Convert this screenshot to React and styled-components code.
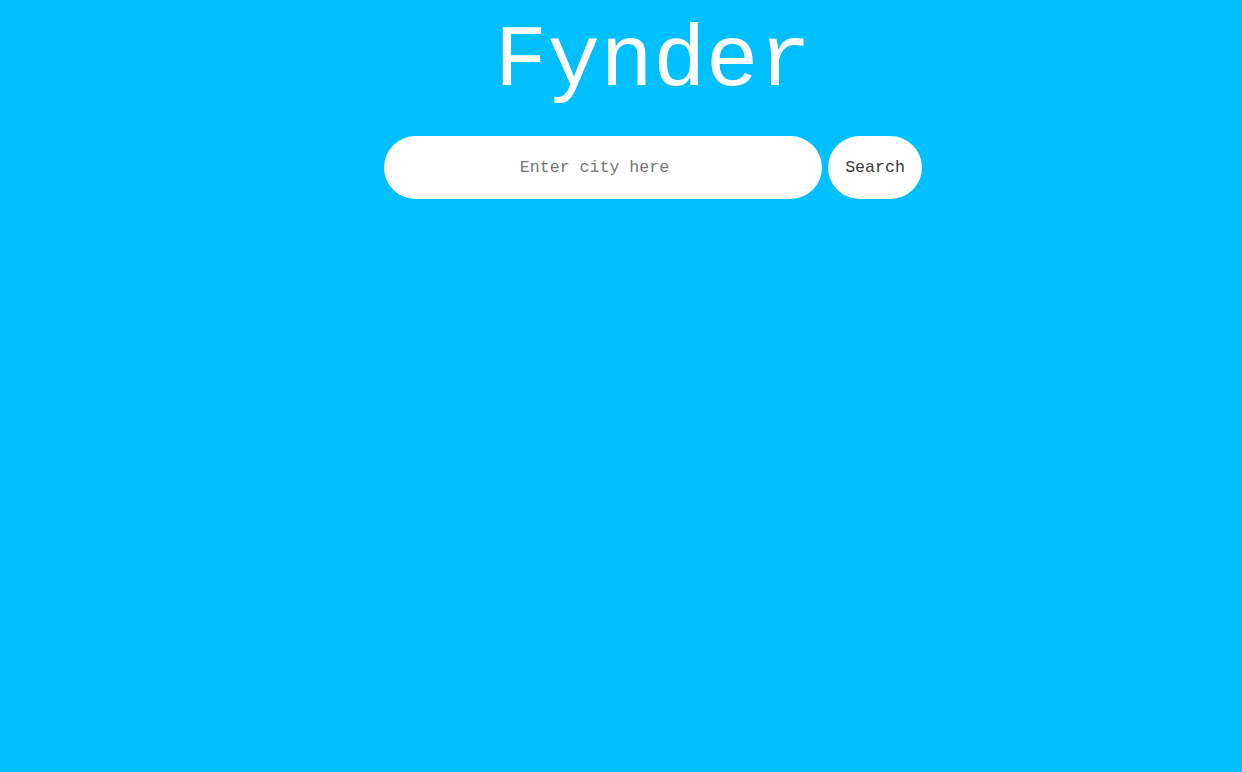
import React from 'react';
import styled, { createGlobalStyle } from 'styled-components';

const GlobalStyle = createGlobalStyle`
  html, body {
    margin: 0;
    padding: 0;
    background: #00bfff;
    font-family: 'Liberation Mono', 'Courier New', monospace;
  }
`;

const Page = styled.div`
  min-height: 772px;
  display: flex;
  flex-direction: column;
  align-items: center;
  padding-left: 64px;
  box-sizing: border-box;
`;

const Title = styled.h1`
  margin: 0;
  font-family: 'Liberation Mono', 'Courier New', monospace;
  font-weight: 400;
  font-size: 88px;
  line-height: 124px;
  color: #ffffff;
`;

const SearchRow = styled.form`
  display: flex;
  gap: 6px;
  margin-top: 12px;
`;

const CityInput = styled.input`
  width: 438px;
  height: 63px;
  box-sizing: border-box;
  padding: 0 17px 0 0;
  border: none;
  border-radius: 32px;
  background: #ffffff;
  outline: none;
  text-align: center;
  font-family: 'Liberation Mono', 'Courier New', monospace;
  font-size: 16.6px;
  color: #333;
  &::placeholder {
    color: #757575;
  }
`;

const SearchButton = styled.button`
  width: 94px;
  height: 63px;
  padding: 0;
  border: none;
  border-radius: 32px;
  background: #ffffff;
  font-family: 'Liberation Mono', 'Courier New', monospace;
  font-size: 16.6px;
  color: #3a3a3a;
  cursor: pointer;
`;

function App() {
  return (
    <>
      <GlobalStyle />
      <Page>
        <Title>Fynder</Title>
        <SearchRow onSubmit={(e) => e.preventDefault()}>
          <CityInput type="text" placeholder="Enter city here" />
          <SearchButton type="submit">Search</SearchButton>
        </SearchRow>
      </Page>
    </>
  );
}

export default App;
